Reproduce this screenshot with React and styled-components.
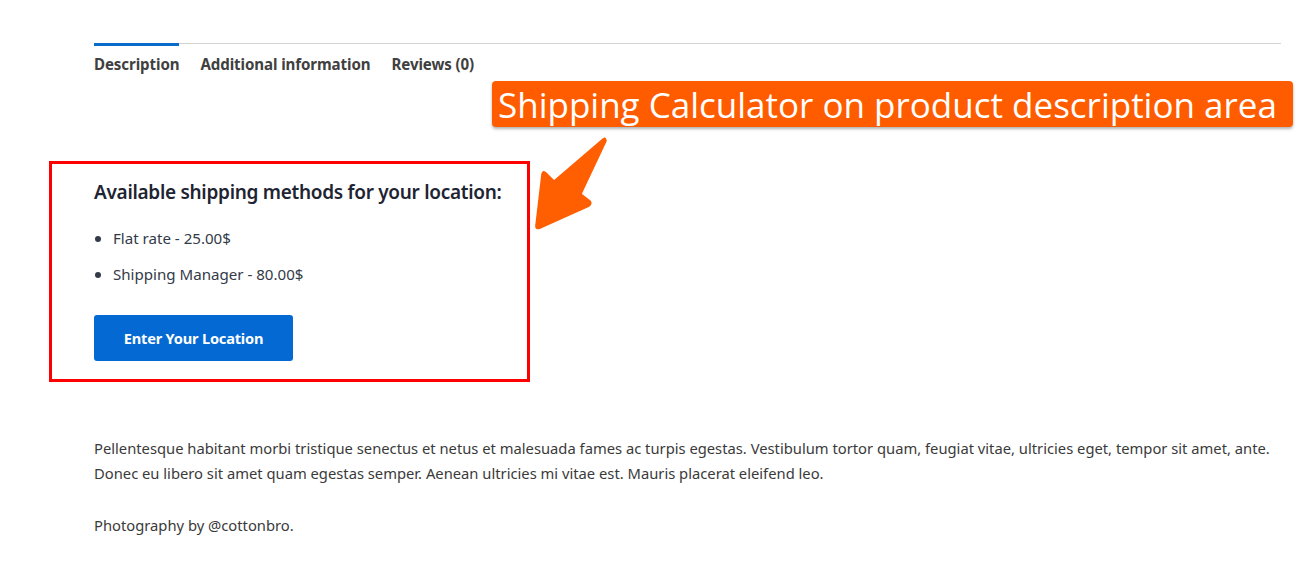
import React from "react";
import styled, { createGlobalStyle } from "styled-components";

const Global = createGlobalStyle`
	html, body {
		margin: 0;
		padding: 0;
		background: #ffffff;
	}
	body {
		font-family: "Noto Sans", "Open Sans", sans-serif;
		color: #404040;
	}
`;

const Page = styled.div`
	position: relative;
	width: 1301px;
	height: 566px;
	overflow: hidden;
	padding: 43px 20px 0 94px;
	box-sizing: border-box;
`;

const Tabs = styled.ul`
	display: flex;
	gap: 21px;
	margin: 0;
	padding: 0;
	list-style: none;
	border-top: 1px solid #d4d4d4;
`;

const Tab = styled.li`
	position: relative;
	padding: 10px 0 0;
	font-size: 15.1px;
	font-weight: 700;
	color: #404040;
	letter-spacing: -0.1px;
	&::before {
		content: "";
		position: absolute;
		top: -1px;
		left: 0;
		right: 0;
		height: 3px;
		background: ${(p) => (p.$active ? "#0b6bcb" : "transparent")};
	}
`;

const Calculator = styled.section`
	margin: 87px 0 0 -45px;
	width: 481px;
	height: 221px;
	box-sizing: border-box;
	border: 3px solid #ff0000;
	padding: 15px 0 0 42px;
`;

const Heading = styled.h3`
	margin: 0;
	font-size: 19px;
	font-weight: 600;
	color: #1e2432;
	letter-spacing: -0.3px;
`;

const Methods = styled.ul`
	margin: 23px 0 0;
	padding: 0 0 0 19px;
	font-size: 15.1px;
	color: #333a48;
	li {
		line-height: 20px;
		margin-bottom: 16px;
	}
	li::marker {
		font-size: 16px;
	}
`;

const Button = styled.button`
	display: block;
	margin-top: 31px;
	width: 199px;
	height: 46px;
	border: 0;
	border-radius: 3px;
	background: #0469d3;
	color: #ffffff;
	font-family: inherit;
	font-size: 14.6px;
	font-weight: 700;
	letter-spacing: -0.2px;
`;

const Body = styled.div`
	margin-top: 54px;
	font-size: 14.75px;
	line-height: 25px;
	color: #3a3a3a;
	p {
		margin: 0 0 27px;
	}
`;

const Label = styled.div`
	position: absolute;
	left: 492px;
	top: 81px;
	width: 801px;
	height: 46px;
	box-sizing: border-box;
	background: #ff5c00;
	border-radius: 4px;
	box-shadow: 0 2px 3px rgba(0, 0, 0, 0.3);
	color: #ffffff;
	font-family: "Open Sans", sans-serif;
	font-size: 35px;
	line-height: 48px;
	padding-left: 6px;
	white-space: nowrap;
`;

const Arrow = styled.svg`
	position: absolute;
	left: 530px;
	top: 134px;
`;

export default function App() {
	return (
		<>
			<Global />
			<Page>
				<Tabs>
					<Tab $active>Description</Tab>
					<Tab>Additional information</Tab>
					<Tab>Reviews (0)</Tab>
				</Tabs>
				<Calculator>
					<Heading>Available shipping methods for your location:</Heading>
					<Methods>
						<li>Flat rate - 25.00$</li>
						<li>Shipping Manager - 80.00$</li>
					</Methods>
					<Button>Enter Your Location</Button>
				</Calculator>
				<Body>
					<p>
						Pellentesque habitant morbi tristique senectus et netus et malesuada fames ac turpis egestas. Vestibulum tortor quam, feugiat vitae, ultricies eget, tempor sit amet, ante. Donec eu libero sit amet quam egestas semper. Aenean ultricies mi vitae est. Mauris placerat eleifend leo.
					</p>
					<p>Photography by @cottonbro.</p>
				</Body>
				<Label>Shipping Calculator on product description area</Label>
				<Arrow width="80" height="100" viewBox="530 134 80 100">
					<path
						d="M603 139 Q606 137 606 141 L581 194 L590 201 Q592 204 589 206 L540 228 Q535 230 536 225 L542 174 Q543 170 546 173 L554 181 Z"
						fill="#ff5f00"
						stroke="#ff5f00"
						strokeWidth="1.5"
						strokeLinejoin="round"
					/>
				</Arrow>
			</Page>
		</>
	);
}
